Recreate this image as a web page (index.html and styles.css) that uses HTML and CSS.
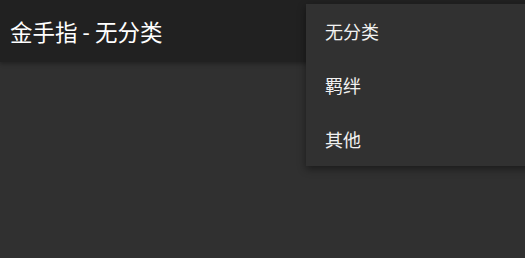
FILE: index.html
```html
<!DOCTYPE html>
<html lang="zh">
<head>
  <meta charset="UTF-8">
  <meta name="viewport" content="width=device-width, initial-scale=1.0">
  <title>金手指 - 无分类</title>
  <link rel="stylesheet" href="styles.css">
</head>
<body>
  <header class="app-bar">
    <h1 class="app-title">金手指 - 无分类</h1>
  </header>

  <main class="content"></main>

  <ul class="menu">
    <li class="menu-item">无分类</li>
    <li class="menu-item">羁绊</li>
    <li class="menu-item">其他</li>
  </ul>
</body>
</html>
```

FILE: styles.css
```css
:root {
  --bar-color: #212121;
  --background-color: #303030;
  --menu-color: #313131;
  --text-color: #ffffff;
}

html, body {
  height: 100%;
}

body {
  margin: 0;
  font-family: Roboto, "Noto Sans CJK SC", sans-serif;
  background: var(--background-color);
  color: var(--text-color);
  overflow: hidden;
}

.app-bar {
  height: 62px;
  background: var(--bar-color);
  display: flex;
  align-items: center;
  padding: 0 10px;
  box-shadow: 0 2px 4px rgba(0, 0, 0, 0.3);
  position: relative;
}

.app-title {
  margin: 0;
  font-size: 22.5px;
  font-weight: 400;
  margin-top: -1px;
}

.menu {
  position: absolute;
  top: 4px;
  left: 306px;
  width: 230px;
  margin: 0;
  padding: 0;
  list-style: none;
  background: var(--menu-color);
  box-shadow: 0 3px 8px rgba(0, 0, 0, 0.45);
}

.menu-item {
  height: 54px;
  display: flex;
  align-items: center;
  padding: 0 19px;
  font-size: 18px;
  color: #f2f2f2;
}
```
